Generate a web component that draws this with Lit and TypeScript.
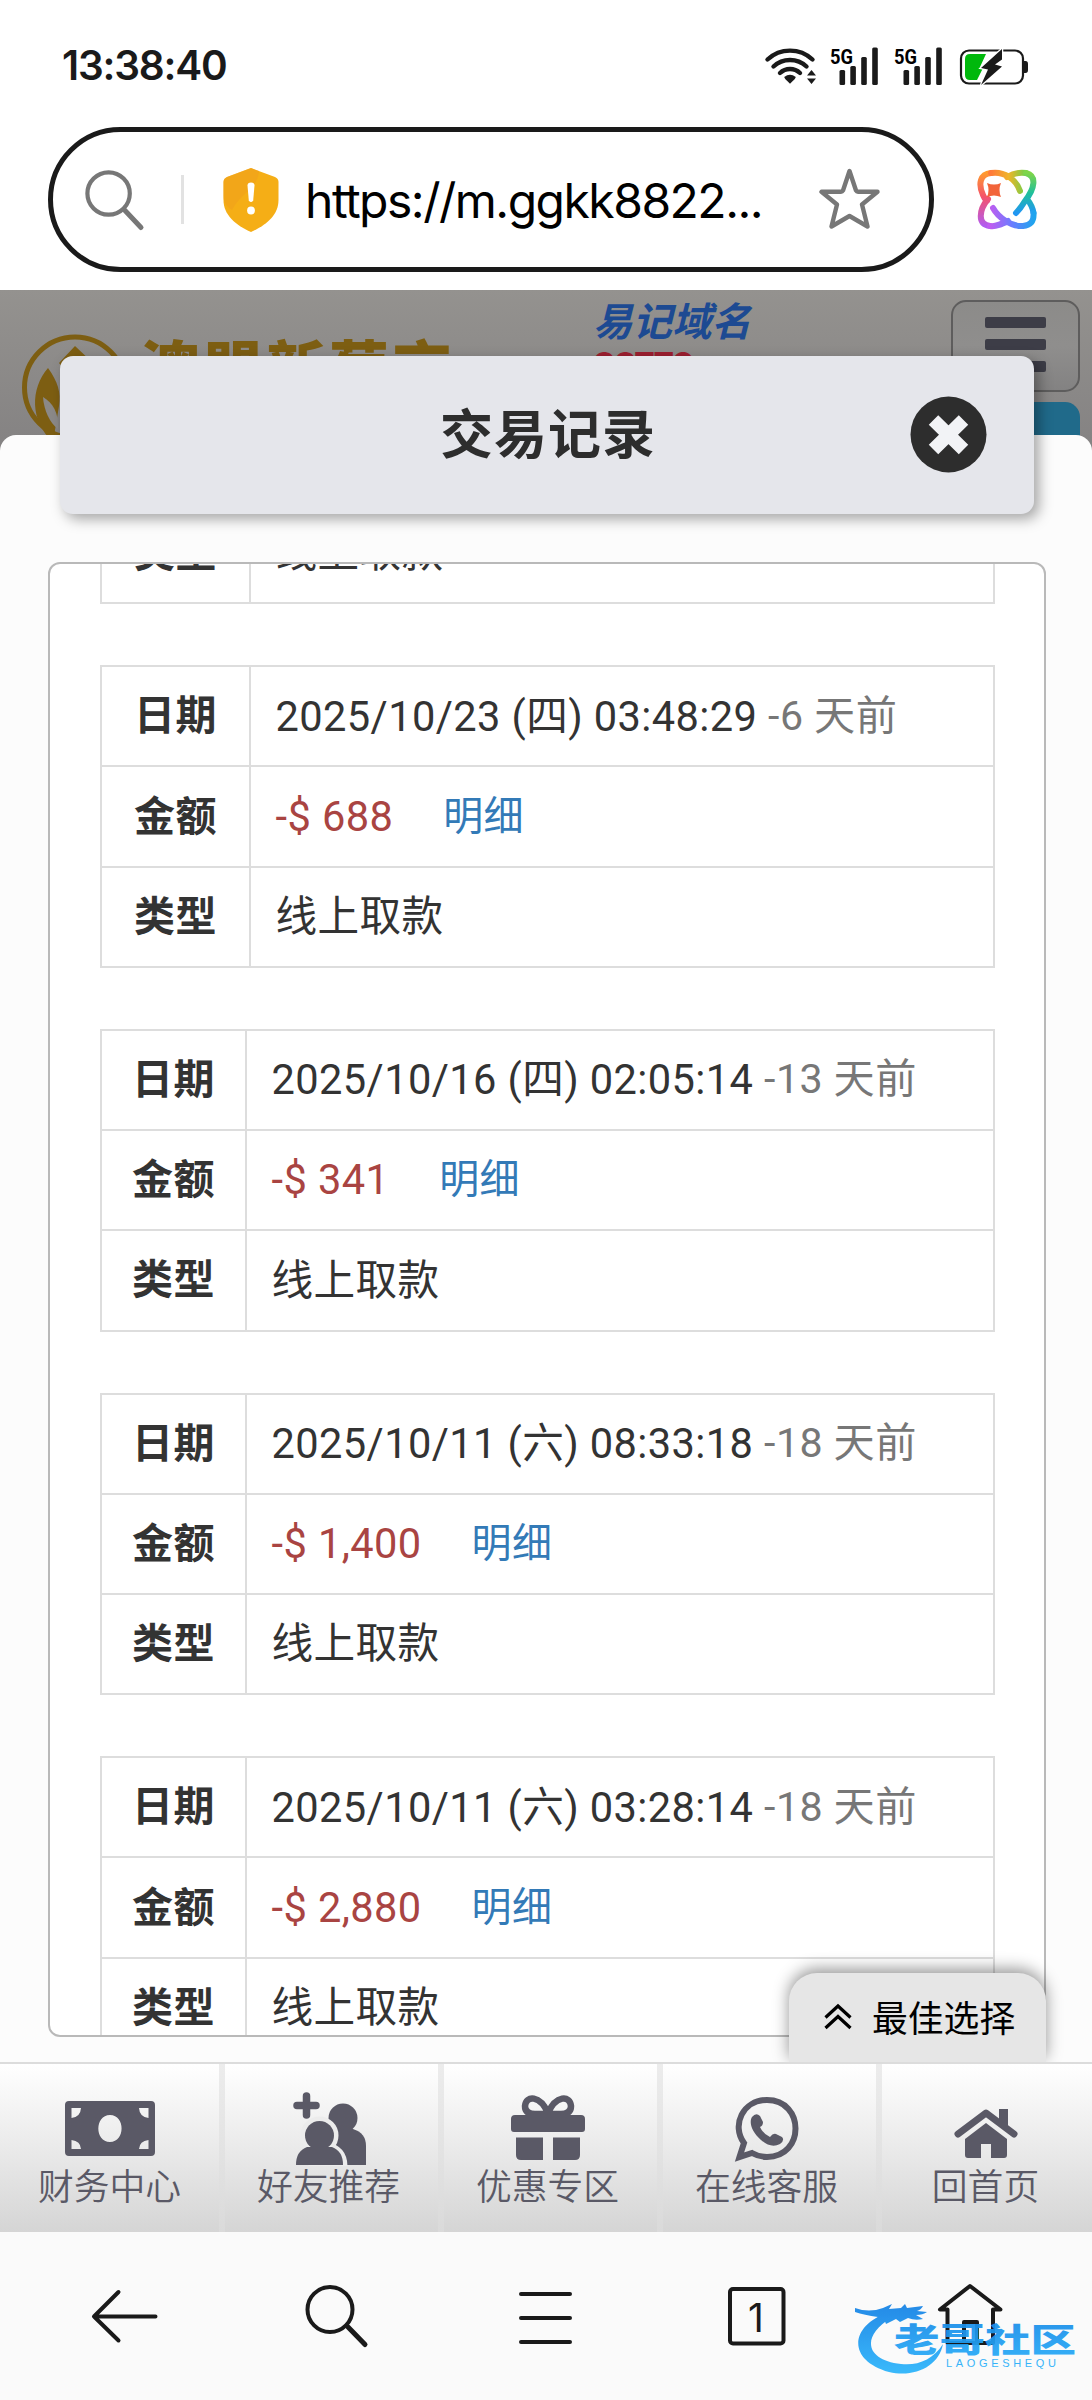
import { LitElement, css, html, svg, nothing } from 'lit'
import { customElement, property } from 'lit/decorators.js'

interface TradeRecord {
  date?: string
  ago?: string
  amount?: string
  type: string
  wide?: boolean
}

const records: TradeRecord[] = [
  { type: '线上取款', wide: true },
  { date: '2025/10/23 (四) 03:48:29', ago: '-6 天前', amount: '-$ 688', type: '线上取款', wide: true },
  { date: '2025/10/16 (四) 02:05:14', ago: '-13 天前', amount: '-$ 341', type: '线上取款' },
  { date: '2025/10/11 (六) 08:33:18', ago: '-18 天前', amount: '-$ 1,400', type: '线上取款' },
  { date: '2025/10/11 (六) 03:28:14', ago: '-18 天前', amount: '-$ 2,880', type: '线上取款' },
]

@customElement('status-bar')
export class StatusBar extends LitElement {

  static get styles() {
    return css`
      :host {
        align-items: center;
        box-sizing: border-box;
        color: #1a1a1a;
        display: flex;
        height: 127px;
        justify-content: space-between;
        padding: 4px 62px 0 62px;
      }
      .time {
        font: 600 40.5px/1 Inter, sans-serif;
        letter-spacing: -1.2px;
        padding-top: 2px;
      }
      .icons {
        display: block;
      }
      .net {
        font: 700 21px Roboto, sans-serif;
      }
    `
  }

  private _signal(x: number) {
    return svg`
      <text class="net" x=${x} y="22.5" textLength="23" lengthAdjust="spacingAndGlyphs">5G</text>
      <g fill="#1a1a1a">
        <rect x=${x + 9.5} y="29" width="5.6" height="15" rx="1.5" />
        <rect x=${x + 20.3} y="25" width="5.6" height="19" rx="1.5" />
        <rect x=${x + 31.2} y="16" width="5.6" height="28" rx="1.5" />
        <rect x=${x + 42.2} y="6.5" width="5.6" height="37.5" rx="1.5" />
      </g>
    `
  }

  render() {
    return html`
      <span class="time">13:38:40</span>
      <svg class="icons" width="270" height="50" viewBox="0 0 270 50">
        <g fill="none" stroke="#1a1a1a" stroke-width="4.4" stroke-linecap="round">
          <path d="M7.500 18.500a33 33 0 0 1 45 0" />
          <path d="M13.500 25.500a24 24 0 0 1 33 0" />
          <path d="M20 32a14.500 14.500 0 0 1 20 0" />
        </g>
        <path fill="#1a1a1a" d="M24.200 36q5.800-4.500 11.600 0l-1 2-4.800 4.800-4.800-4.800z" />
        <path fill="#1a1a1a" d="M47 34.500l4.500-5.500 4.500 5.500zM47 37.500l4.500 5.500 4.500-5.500z" />
        ${this._signal(70)}
        ${this._signal(134)}
        <rect x="201" y="9.500" width="62" height="33" rx="8" fill="none" stroke="#1a1a1a" stroke-width="2.200" />
        <path fill="#1a1a1a" d="M264 20h1.500q2.500 0 2.500 3v6q0 3-2.500 3h-1.500z" />
        <path fill="#00b80c" d="M210 13h16l-6 13 3 1-6 12h-7q-5 0-5-5v-16q0-5 5-5z" />
        <path fill="#1a1a1a" stroke="#fff" stroke-width="2.500" paint-order="stroke" d="M242 8l-21 19 7 1.500-7 15.500 21-18.500-7-2 7-5z" />
      </svg>
    `
  }
}

@customElement('address-bar')
export class AddressBar extends LitElement {

  static get styles() {
    return css`
      :host {
        align-items: center;
        box-sizing: border-box;
        display: flex;
        height: 163px;
        padding: 0 54px 18px 48px;
      }
      .pill {
        align-items: center;
        border: 5px solid #1a1a1a;
        border-radius: 73px;
        box-sizing: border-box;
        display: flex;
        height: 145px;
        margin-right: 43px;
        padding: 0 48px 0 30px;
        width: 886px;
      }
      .pill svg {
        flex: none;
      }
      .divider {
        background: #e2e2e2;
        height: 49px;
        margin: 0 39px 0 34px;
        width: 3px;
      }
      .url {
        color: #000;
        flex: 1;
        font: 400 48px/1 Inter, sans-serif;
        letter-spacing: -1.5px;
        margin: 2px 0 0 26px;
        white-space: nowrap;
      }
    `
  }

  render() {
    return html`
      <div class="pill">
        <svg width="64" height="64" viewBox="0 0 64 64" fill="none" stroke="#777" stroke-linecap="round">
          <circle cx="25.600" cy="25.500" r="21.200" stroke-width="4.200" />
          <path d="M42 42.500l16 17" stroke-width="5" />
        </svg>
        <div class="divider"></div>
        <svg width="56" height="64" viewBox="0 0 56 64">
          <path fill="#f5ae16" d="M28 0l24 9q3.500 1.500 3.500 5v18c0 15-12 25-27.500 32C12.500 57 .5 47 .5 32V14q0-3.500 3.500-5z" />
          <path fill="#f0a01c" opacity=".6" d="M28 0l8 3C34 22 20 22 9 42 3 38 .5 34 .5 28V14q0-3.500 3.500-5z" />
          <path fill="#fff" d="M24.500 17.500q0-3 3.500-3t3.500 3l-1.300 15q-2.200 3-4.400 0z" />
          <circle cx="28" cy="42.500" r="3.900" fill="#fff" />
        </svg>
        <span class="url">https://m.ggkk8822...</span>
        <svg width="62" height="64" viewBox="0 0 62 64" fill="none" stroke="#777" stroke-width="4.400" stroke-linejoin="round">
          <path d="M30.500 3l6.500 19.500q.7 1.300 2 1.300h19.500L43 36.500l5.500 22L30.500 48l-18 10.500 5.500-22L2.500 23.800H22q1.300 0 2-1.300z" />
        </svg>
      </div>
      <svg width="60" height="62" viewBox="0 0 60 62" fill="none" stroke-width="6" stroke-linecap="round">
        <defs>
          <linearGradient id="warm" x1="0" y1="0" x2="0" y2="1">
            <stop offset="0" stop-color="#ff9a2e" />
            <stop offset=".45" stop-color="#f4526c" />
            <stop offset="1" stop-color="#b25cf0" />
          </linearGradient>
          <linearGradient id="top" x1="0" y1="0" x2="1" y2="0">
            <stop offset="0" stop-color="#ff7a3a" />
            <stop offset=".5" stop-color="#f0b429" />
            <stop offset="1" stop-color="#6ed04a" />
          </linearGradient>
          <linearGradient id="right" x1="0" y1="0" x2="0" y2="1">
            <stop offset="0" stop-color="#7fd548" />
            <stop offset=".5" stop-color="#1fc09a" />
            <stop offset="1" stop-color="#2196f3" />
          </linearGradient>
          <linearGradient id="bottom" x1="0" y1="0" x2="1" y2="0">
            <stop offset="0" stop-color="#c05cf0" />
            <stop offset=".5" stop-color="#6b7cff" />
            <stop offset="1" stop-color="#1fa4ee" />
          </linearGradient>
        </defs>
        <path stroke="url(#warm)" d="M6 26C1 15 3 5 14 4M6 26q1 3 4 6M11 30C2 41 0 55 13 57" />
        <path stroke="url(#top)" d="M14 4C27 2 39 10 43 22M30 8C37 4 43 3 49 4" />
        <path stroke="url(#right)" d="M49 4c11 3 9 15-1 28M50 30c4 5 6 10 6.500 14M48 32c-3 5-6 9-9 12" />
        <path stroke="url(#bottom)" d="M13 57c6 1 12-2 18-5M16 39c5 9 18 19 30 18 9-1 11-6 10.500-13" />
        <path fill="#f2643a" d="M10 14q7 3 14 0-3 7 0 14-7-3-14 0 3-7 0-14z" />
      </svg>
    `
  }
}

@customElement('site-header')
export class SiteHeader extends LitElement {

  static get styles() {
    return css`
      :host {
        background: linear-gradient(#94928f, #858383 150px);
        box-sizing: border-box;
        display: flex;
        height: 172px;
        overflow: hidden;
        padding: 10px 12px 0 20px;
      }
      .brand {
        display: flex;
        gap: 12px;
        width: 573px;
      }
      .emblem {
        margin-top: 33px;
      }
      .name {
        color: #7d5e12;
        font: 900 60px/1 'Noto Sans CJK SC', sans-serif;
        letter-spacing: 3px;
        margin-top: 35px;
      }
      .domain {
        color: #1d4a92;
        font: italic 700 39.5px/38px 'Noto Sans CJK SC', sans-serif;
      }
      .number {
        color: #9c1f30;
        font: 700 36px/1 Inter, sans-serif;
        letter-spacing: -2.5px;
        margin-top: 9px;
      }
      .actions {
        margin-left: auto;
        width: 129px;
      }
      .menu {
        background: linear-gradient(#8c8b89, #8f8e8d 50%, #838282);
        border: 2px solid #5e5d5d;
        border-radius: 15px;
        box-sizing: border-box;
        display: flex;
        flex-direction: column;
        gap: 11.5px;
        height: 92px;
        padding: 15px 32px;
      }
      .bar {
        background: #3d3d47;
        border-radius: 2px;
        flex: none;
        height: 10.5px;
      }
      .tag {
        background: #206a8a;
        border-radius: 15px;
        height: 70px;
        margin-top: 10px;
      }
    `
  }

  render() {
    return html`
      <div class="brand">
        <svg class="emblem" width="108" height="112" viewBox="0 0 108 112">
          <circle cx="55" cy="54.500" r="50.500" fill="none" stroke="#7d5e12" stroke-width="5" />
          <path fill="#7d5e12" d="M55 13L73 30 55 50 39 30zM28 35c10 14 13 24 11 38l-6 36C10 88 10 56 28 35z" />
          <path fill="#8b8988" d="M23 64c10 6 16 16 15 32-8-6-14-18-15-32z" />
        </svg>
        <span class="name">澳盟新葡京</span>
      </div>
      <div class="domain">
        易记域名
        <div class="number">99770</div>
      </div>
      <div class="actions">
        <div class="menu">
          <div class="bar"></div>
          <div class="bar"></div>
          <div class="bar"></div>
        </div>
        <div class="tag"></div>
      </div>
    `
  }
}

@customElement('record-table')
export class RecordTable extends LitElement {

  @property({ attribute: false })
  record!: TradeRecord

  static get styles() {
    return css`
      :host {
        display: block;
        flex: none;
      }
      .table {
        border: 2px solid #ddd;
        border-bottom-width: 0;
        color: #333;
        font: 400 41.6px/1 Roboto, 'Noto Sans CJK SC', sans-serif;
        letter-spacing: .4px;
      }
      .row {
        border-bottom: 2px solid #ddd;
        box-sizing: border-box;
        display: grid;
        grid-template-columns: 145px 1fr;
        height: 100.2px;
      }
      .wide .row {
        grid-template-columns: 149px 1fr;
      }
      .label, .value {
        align-items: center;
        display: flex;
      }
      .label {
        border-right: 2px solid #ddd;
        font-size: 41px;
        font-weight: 700;
        justify-content: center;
        padding-top: 1px;
      }
      .value {
        padding: 0 0 0 24.5px;
        white-space: pre;
      }
      .ago {
        color: #777;
        font-size: 41.2px;
      }
      .amount {
        color: #a94442;
      }
      .detail {
        color: #337ab7;
        font-size: 40px;
        margin-left: 50px;
        text-decoration: none;
      }
    `
  }

  private _row(label: string, value: unknown) {
    return html`
      <div class="row">
        <div class="label">${label}</div>
        <div class="value">${value}</div>
      </div>
    `
  }

  render() {
    const { date, ago, amount, type, wide } = this.record
    return html`
      <div class="table ${wide ? 'wide' : ''}">
        ${date ? this._row('日期', html`<span>${date} </span><span class="ago">${ago}</span>`) : nothing}
        ${amount ? this._row('金额', html`<span class="amount">${amount}</span><a class="detail">明细</a>`) : nothing}
        ${this._row('类型', type)}
      </div>
    `
  }
}

@customElement('record-dialog')
export class RecordDialog extends LitElement {

  static get styles() {
    return css`
      :host {
        background: #fcfcfc;
        border-radius: 16px 16px 0 0;
        box-sizing: border-box;
        display: block;
        height: 1627px;
        margin-top: -27px;
        padding: 127px 46px 0 48px;
        position: relative;
      }
      /* title card straddles the top edge of the dialog */
      .title {
        align-items: center;
        background: #e5e6eb;
        border-radius: 13px;
        box-shadow: 5px 5px 14px rgba(0, 0, 0, .35);
        box-sizing: border-box;
        color: #2d2d2d;
        display: flex;
        font: 700 53px/1 'Noto Sans CJK SC', sans-serif;
        height: 158px;
        justify-content: center;
        left: 60px;
        letter-spacing: 1px;
        padding: 0 0 8px 2px;
        position: absolute;
        top: -79px;
        width: 974px;
        z-index: 1;
      }
      .close {
        position: absolute;
        right: 47px;
        top: 40px;
      }
      .list {
        background: #fff;
        border: 2px solid #b9b9b9;
        border-radius: 12px;
        box-sizing: border-box;
        display: flex;
        flex-direction: column;
        gap: 61.1px;
        height: 1475px;
        overflow: hidden;
        padding: 0 49px 0 50px;
      }
      .list record-table:first-child {
        margin-top: -62px;
      }
      .best {
        align-items: center;
        background: #e6e6e6;
        border-radius: 28px 28px 0 0;
        bottom: 0;
        box-shadow: 0 -4px 16px rgba(0, 0, 0, .42);
        box-sizing: border-box;
        clip-path: inset(-30px -30px 0 -30px);
        color: #000;
        display: flex;
        font: 400 35.8px/1 'Noto Sans CJK SC', sans-serif;
        gap: 20px;
        height: 89px;
        padding: 0 0 2px 35px;
        position: absolute;
        right: 46px;
        width: 257px;
      }
    `
  }

  render() {
    return html`
      <div class="title">
        交易记录
        <svg class="close" width="77" height="77" viewBox="0 0 77 77">
          <circle cx="38.500" cy="38.500" r="38" fill="#2d2d2d" />
          <path d="M23.500 24L53.500 53.500M53.500 24L23.500 53.500" stroke="#f2f3f6" stroke-width="13.500" />
        </svg>
      </div>
      <div class="list">
        ${records.map((record) => html`<record-table .record=${record}></record-table>`)}
      </div>
      <div class="best">
        <svg width="28" height="28" viewBox="0 0 28 28" fill="none" stroke="#000" stroke-width="3.200">
          <path d="M1.500 14.500L14 3l12.500 11.500M1.500 25L14 13.500 26.500 25" />
        </svg>
        最佳选择
      </div>
    `
  }
}

const navItems = [
  {
    label: '财务中心',
    icon: svg`
      <path fill-rule="evenodd" d="M5 10H87q4 0 4 4V61q0 4-4 4H5q-4 0-4-4V14q0-4 4-4zM46 24c-15.500 0-15.500 27 0 27s15.500-27 0-27z
        M7.500 17v10q9-1 9.500-10zM84.500 17v10q-9-1-9.500-10zM7.500 58V49q9 1 9.500 9zM84.500 58V49q-9 1-9.500 9z" />`,
  },
  {
    label: '好友推荐',
    icon: svg`
      <circle cx="60" cy="27" r="14.500" />
      <path d="M50 38h20q13 4 13 17v19H50z" />
      <g fill="#ececec" stroke="#ececec" stroke-width="9">
        <path d="M30 56h14q16 3 16 20H30z" />
        <circle cx="36.500" cy="44.500" r="14.500" />
      </g>
      <circle cx="36.500" cy="44.500" r="14.500" />
      <path d="M24 56h25q11 4 11 18H13q0-14 11-18z" />
      <path d="M23.500 5v19M14 14.500h19" stroke="#5a5966" stroke-width="7.500" stroke-linecap="round" />`,
  },
  {
    label: '优惠专区',
    icon: svg`
      <path d="M46 22C38 4 24 4 23 15q0 8 10 8h26q10 0 10-8C68 4 54 4 46 22z" fill="none" stroke="#5a5966" stroke-width="6.500" />
      <path d="M13 24h66q4 0 4 4v10q0 3-3 3H12q-3 0-3-3V28q0-4 4-4zM14 46.500h27V69H19q-5 0-5-5zM51 46.500h27V64q0 5-5 5H51z" />`,
  },
  {
    label: '在线客服',
    icon: svg`
      <path fill="none" stroke="#5a5966" stroke-width="6" d="M18.500 66l4.500-14C10 34 22 9 46 9c38 0 38 57 0 57q-8 0-15-4z" />
      <path d="M31 26q4-5 8-1l3 6q0 4-3 5 3 7 10 10 3-4 6-3l6 3q3 3-2 7-9 5-19-4C30 40 28 31 31 26z" />`,
  },
  {
    label: '回首页',
    icon: svg`
      <path fill="none" stroke="#5a5966" stroke-width="7" stroke-linecap="round" stroke-linejoin="round" d="M18 43L46 22 74 43" />
      <path d="M59 18h9v20l-9-8zM46 32L67 48V64q0 3-3 3H51V53H41V67h-13q-3 0-3-3V48z" />`,
  },
]

@customElement('site-nav')
export class SiteNav extends LitElement {

  static get styles() {
    return css`
      :host {
        border-top: 2px solid #dcdcdc;
        box-sizing: border-box;
        display: grid;
        grid-template-columns: repeat(5, 219px);
        height: 170px;
      }
      .item {
        align-items: center;
        background: linear-gradient(#fff, #d5d5d5);
        color: #5a5966;
        display: flex;
        flex-direction: column;
        font: 350 35.8px/42px 'Noto Sans CJK SC', sans-serif;
        padding-top: 27px;
      }
      .item + .item {
        background: linear-gradient(#ececec, #dadada) 0 0 / 6px 100% no-repeat, linear-gradient(#fff, #d5d5d5);
      }
      .icon {
        fill: #5a5966;
        flex: none;
        margin-bottom: -3px;
      }
    `
  }

  render() {
    return html`
      ${navItems.map(({ label, icon }) => html`
        <div class="item">
          <svg class="icon" width="92" height="75" viewBox="0 0 92 75">${icon}</svg>
          <span>${label}</span>
        </div>
      `)}
    `
  }
}

@customElement('browser-toolbar')
export class BrowserToolbar extends LitElement {

  static get styles() {
    return css`
      :host {
        background: #fafafa;
        box-sizing: border-box;
        display: grid;
        grid-template-columns: repeat(5, 211.3px);
        height: 168px;
        padding: 50px 0 0 18px;
        position: relative;
      }
      .button {
        display: flex;
        height: 70px;
        justify-content: center;
      }
      .button svg {
        fill: none;
        stroke: #1a1a1a;
        stroke-linecap: round;
        stroke-linejoin: round;
        stroke-width: 4;
      }
      .count {
        fill: #1a1a1a;
        font: 400 39px Inter, sans-serif;
        stroke: none;
      }
      .watermark {
        bottom: 22px;
        position: absolute;
        right: 13px;
      }
      .cn {
        font: 900 33px 'Noto Sans CJK SC', sans-serif;
      }
      .latin {
        font: 400 11px 'Liberation Sans', sans-serif;
      }
    `
  }

  render() {
    return html`
      <div class="button">
        <svg width="70" height="70" viewBox="0 0 70 70"><path d="M66.500 34.500H5M29.500 10L5 34.500 29.500 58.500" /></svg>
      </div>
      <div class="button">
        <svg width="70" height="70" viewBox="0 0 70 70">
          <circle cx="30" cy="27.500" r="22.500" />
          <path d="M48 45L65 62.500" stroke-width="5" />
        </svg>
      </div>
      <div class="button">
        <svg width="70" height="70" viewBox="0 0 70 70"><path d="M10 12h49M10 36h49M10 60h49" /></svg>
      </div>
      <div class="button">
        <svg width="70" height="70" viewBox="0 0 70 70">
          <rect x="7" y="7" width="53.500" height="54.500" rx="3" />
          <text class="count" x="33" y="50" text-anchor="middle">1</text>
        </svg>
      </div>
      <div class="button">
        <svg width="70" height="70" viewBox="0 0 70 70">
          <path d="M36 4L6 27.500h7.500V61H59V27.500h7.500zM30 61V40h13v21" />
        </svg>
      </div>
      <svg class="watermark" width="224" height="76" viewBox="0 0 224 76">
        <defs>
          <linearGradient id="sea" gradientUnits="userSpaceOnUse" x1="0" y1="4" x2="0" y2="70">
            <stop offset="0" stop-color="#1583e6" />
            <stop offset="1" stop-color="#2bb4fb" />
          </linearGradient>
        </defs>
        <g fill="url(#sea)" opacity=".93">
          <path d="M34 10C-6 24-8 58 34 70c26 6 50-6 54-28-10 16-26 22-42 20C10 58 6 34 36 16z" />
          <path d="M0 6q14 5 28 0l9-4-3 5 12-1 4-4 2 4 16-2q-2 4-6 5l10 1q-4 3-11 3l7 4q-8 2-15-1l-8 4-4-3-10 5-2-5-9 4 3-6q-14-2-23-5z" />
          <text class="cn" x="39" y="49.500" textLength="182" lengthAdjust="spacingAndGlyphs">老哥社区</text>
          <text class="latin" x="91" y="65" textLength="110">LAOGESHEQU</text>
        </g>
      </svg>
    `
  }
}

@customElement('app-root')
export class AppRoot extends LitElement {

  static get styles() {
    return css`
      :host {
        background: #fff;
        display: flex;
        flex-direction: column;
        height: 2400px;
        overflow: hidden;
        width: 1092px;
      }
    `
  }

  render() {
    return html`
      <status-bar></status-bar>
      <address-bar></address-bar>
      <site-header></site-header>
      <record-dialog></record-dialog>
      <site-nav></site-nav>
      <browser-toolbar></browser-toolbar>
    `
  }
}
